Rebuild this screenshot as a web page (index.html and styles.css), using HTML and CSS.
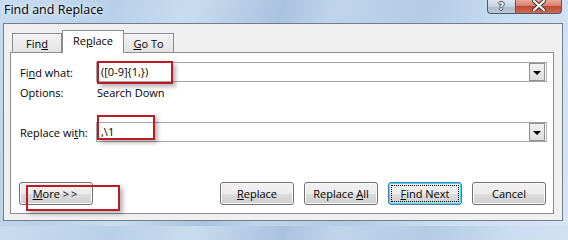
FILE: index.html
```html
<!DOCTYPE html>
<html>
<head>
<meta charset="utf-8">
<link rel="stylesheet" href="styles.css">
</head>
<body>
<div class="titlebar">
  <div class="title">Find and Replace</div>
  <div class="caption-btns">
    <div class="cap cap-help"><span class="q">?</span></div>
    <div class="cap cap-close"><svg width="14" height="11" viewBox="0 0 14 11"><path d="M2 1 L12 10 M12 1 L2 10" stroke="#3b3b3b" stroke-width="4" stroke-linecap="square"/><path d="M2 1 L12 10 M12 1 L2 10" stroke="#fff" stroke-width="2" stroke-linecap="square"/></svg></div>
  </div>
</div>
<div class="window">
  <div class="tabs">
    <div class="tab"><span>Fin<u>d</u></span></div>
    <div class="tab tab-active"><span>Re<u>p</u>lace</span></div>
    <div class="tab"><span><u>G</u>o To</span></div>
  </div>
  <div class="panel">
    <div class="row row-find">
      <div class="label">Fi<u>n</u>d what:</div>
      <div class="combo"><div class="combo-text">([0-9]{1,})</div><div class="drop"><span class="tri"></span></div></div>
    </div>
    <div class="row row-options">
      <div class="label">Options:</div>
      <div class="value">Search Down</div>
    </div>
    <div class="row row-replace">
      <div class="label">Replace wi<u>t</u>h:</div>
      <div class="combo"><div class="combo-text">,\1</div><div class="drop"><span class="tri"></span></div></div>
    </div>
    <div class="buttons">
      <div class="btn"><span><u>M</u>ore <span class="gt">&gt;&gt;</span></span></div>
      <div class="spacer"></div>
      <div class="btn"><span><u>R</u>eplace</span></div>
      <div class="btn"><span>Replace <u>A</u>ll</span></div>
      <div class="btn btn-default"><span class="focus"><span><u>F</u>ind Next</span></span></div>
      <div class="btn"><span>Cancel</span></div>
    </div>
    <div class="mark mark-find"></div>
    <div class="mark mark-replace"></div>
    <div class="mark mark-more"></div>
  </div>
</div>
</body>
</html>
```

FILE: styles.css
```css
html, body {
  margin: 0;
  padding: 0;
}
body {
  width: 568px;
  height: 226px;
  overflow: hidden;
  font-family: "Open Sans", "Noto Sans", sans-serif;
  font-size: 11px;
  color: #000;
  background: linear-gradient(110deg, #c8dcf0 0%, #b9d0e8 18%, #c9dcef 30%, #a9c2de 44%, #c0d5eb 52%, #b3cbe5 66%, #cbdef1 80%, #d5e5f5 100%);
}
u { text-decoration: underline; text-underline-offset: 1px; }

.titlebar {
  height: 23px;
  display: flex;
  justify-content: space-between;
  align-items: flex-start;
}
.title {
  padding: 1px 0 0 4px;
  font-size: 12.5px;
  line-height: 17px;
  color: #000;
  text-shadow: 0 0 6px #e6f0fa, 0 0 3px #e6f0fa;
}
.caption-btns {
  display: flex;
  margin-right: 6px;
}
.cap {
  height: 14px;
  box-sizing: border-box;
  border: 1px solid #4d5b6c;
  border-top: none;
  display: flex;
  align-items: center;
  justify-content: center;
}
.cap-help {
  width: 28px;
  border-radius: 0 0 0 4px;
  border-right: none;
  background: linear-gradient(#dde6ef 0%, #c5d1de 50%, #aebdcd 51%, #b9c8d8 100%);
}
.q {
  font-family: "DejaVu Sans", sans-serif;
  font-weight: bold;
  font-size: 10px;
  line-height: 12px;
  color: #fff;
  text-shadow: 1px 0 0 #3d4a58, -1px 0 0 #3d4a58, 0 1px 0 #3d4a58, 0 -1px 0 #3d4a58;
}
.cap-close {
  width: 47px;
  border-radius: 0 0 4px 0;
  background: linear-gradient(#e9a99b 0%, #d67d6a 45%, #c24a34 50%, #cf6a50 100%);
}
.cap-close svg { margin-top: -2px; }

.window {
  margin: 0 5px 0 3px;
  height: 198px;
  box-sizing: border-box;
  background: #f0f0f0;
  border: 1px solid #6f7d8c;
  padding: 6px 8px 0 6px;
}
.tabs {
  display: flex;
  align-items: flex-end;
  height: 22px;
  padding-left: 2px;
}
.tab {
  box-sizing: border-box;
  height: 19px;
  width: 50px;
  border: 1px solid #898c95;
  border-bottom: none;
  background: linear-gradient(#f4f4f4, #e3e3e3);
  display: flex;
  align-items: center;
  justify-content: center;
  line-height: 14px;
  padding-top: 1px;
}
.tab + .tab { border-left: none; }
.tab-active {
  width: 62px;
  height: 23px;
  margin-bottom: -1px;
  background: #fff;
  border-left: 1px solid #898c95 !important;
  position: relative;
  z-index: 1;
  padding-top: 0;
  padding-bottom: 2px;
}
.tab-active + .tab { border-left: none; }

.panel {
  position: relative;
  box-sizing: border-box;
  height: 162px;
  background: #fff;
  border: 1px solid #898c95;
  padding: 9px 6px 0 9px;
}
.row {
  display: flex;
  align-items: center;
  height: 20px;
}
.label {
  width: 76px;
  flex: none;
}
.row-options .value { padding-left: 1px; }
.row-replace { margin-top: 20px; }
.combo {
  flex: 1;
  height: 20px;
  box-sizing: border-box;
  border: 1px solid #a4a4a4;
  border-right-color: #b5b5b5;
  display: flex;
  align-items: center;
  background: #fff;
}
.combo-text {
  flex: 1;
  padding-left: 4px;
  line-height: 16px;
}
.drop {
  width: 16px;
  height: 18px;
  box-sizing: border-box;
  margin-right: 1px;
  border: 1px solid #8f8f8f;
  background: linear-gradient(#f2f2f2, #dcdcdc);
  display: flex;
  align-items: center;
  justify-content: center;
}
.tri {
  width: 0;
  height: 0;
  border-left: 4px solid transparent;
  border-right: 4px solid transparent;
  border-top: 4px solid #000;
  margin-top: 1px;
}

.buttons {
  display: flex;
  gap: 10px;
  margin-top: 40px;
  margin-left: -1px;
  margin-right: 1px;
}
.spacer { flex: 1; }
.btn {
  width: 74px;
  height: 23px;
  box-sizing: border-box;
  border: 1px solid #707070;
  border-radius: 3px;
  background: linear-gradient(#f2f2f2 0%, #ebebeb 50%, #dddddd 51%, #cfcfcf 100%);
  box-shadow: inset 0 0 0 1px #fbfbfb;
  display: flex;
  align-items: center;
  justify-content: center;
  line-height: 14px;
}
.gt { letter-spacing: 2px; }
.btn-default {
  border-color: #3c7fb1;
  box-shadow: inset 0 0 0 1px #48d8fb;
}
.btn-default .focus {
  box-sizing: border-box;
  width: 68px;
  height: 17px;
  border: 1px dotted #000;
  display: flex;
  align-items: center;
  justify-content: center;
}

.mark {
  position: absolute;
  box-sizing: border-box;
  border: 2px solid #bb1b22;
  box-shadow: 3px 3px 4px rgba(0, 0, 0, 0.28);
}
.mark-find { left: 86px; top: 8px; width: 76px; height: 23px; }
.mark-replace { left: 86px; top: 62px; width: 58px; height: 25px; }
.mark-more { left: 15px; top: 132px; width: 94px; height: 26px; }
```
